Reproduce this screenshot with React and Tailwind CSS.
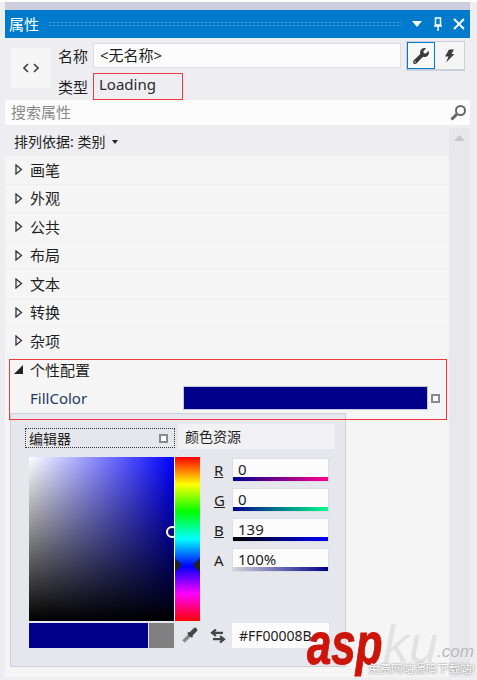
import React from 'react';
import { FaWrench } from 'react-icons/fa';

const font = { fontFamily: '"Noto Sans", "Noto Sans CJK SC", sans-serif' };

const categories = ['画笔', '外观', '公共', '布局', '文本', '转换', '杂项'];

const channels = [
  { label: 'R', value: '0', bar: 'bg-[linear-gradient(to_right,#00008b,#ff008b)]', underline: true },
  { label: 'G', value: '0', bar: 'bg-[linear-gradient(to_right,#00008b,#00ff8b)]', underline: true },
  { label: 'B', value: '139', bar: 'bg-[linear-gradient(to_right,#000000,#0000ff)]', underline: true },
  { label: 'A', value: '100%', bar: 'bg-[linear-gradient(to_right,#d4d4dc,#00008b)]', underline: false },
];

const Collapsed = () => (
  <svg width="8" height="11" viewBox="0 0 8 11" className="shrink-0">
    <path d="M1 1 L6.5 5.5 L1 10 Z" fill="none" stroke="#333" strokeWidth="1.3" />
  </svg>
);

const Expanded = () => (
  <svg width="9" height="9" viewBox="0 0 9 9" className="shrink-0">
    <path d="M9 0 V9 H0 Z" fill="#222" />
  </svg>
);

const TinySquare = () => (
  <div className="w-[9px] h-[9px] border-2 border-[#8a8a8a] bg-white" />
);

const Watermark = () => (
  <div className="absolute left-[306px] top-[618px] w-[171px] h-[62px] pointer-events-none italic" style={{ fontFamily: '"Liberation Sans", sans-serif' }}>
    <span className="absolute left-[1px] top-[6px] text-[60px] leading-[40px] font-bold text-[#cc1409] [-webkit-text-stroke:1px_#cc1409] origin-left scale-x-[0.73]">asp</span>
    <span className="absolute left-[77px] top-[8px] text-[52px] leading-[36px] text-[#e2e2e2]">ku</span>
    <span className="absolute left-[131px] top-[27px] text-[17px] leading-[14px] text-[#b9b9b9]">.com</span>
    <span className="absolute left-[62px] top-[45px] text-[11.5px] leading-[12px] not-italic text-white whitespace-nowrap [text-shadow:0_0_2px_#555]" style={font}>
      免费网站源码下载站!
    </span>
  </div>
);

export default function App() {
  return (
    <div className="relative w-[477px] h-[680px] overflow-hidden bg-[#eeeef2] text-[15px] text-[#1e1e1e]" style={font}>
      {/* top strip */}
      <div className="h-[2px] bg-white" />
      <div className="h-[8px] ml-[5px] w-[465px] bg-[#cccedb]" />

      {/* panel */}
      <div className="ml-[5px] w-[465px] h-[667px] flex flex-col">
        {/* title bar */}
        <div className="h-[28px] shrink-0 bg-[#007acc] flex items-center pl-[4px] pr-[5px] text-white">
          <span className="text-[15px] leading-none">属性</span>
          <div className="flex-1 h-[6px] mx-[9px] bg-[radial-gradient(#4aa3dd_1px,transparent_1px)] bg-[length:4px_3px]" />
          <svg width="10" height="6" viewBox="0 0 10 6" className="ml-[1px]">
            <path d="M0 0 H10 L5 6 Z" fill="#fff" />
          </svg>
          <svg width="10" height="14" viewBox="0 0 10 14" className="ml-[11px]">
            <path d="M2.5 1 H7.5 V8 H2.5 Z M1 9 H9 M5 9 V14" fill="none" stroke="#fff" strokeWidth="1.5" />
          </svg>
          <svg width="12" height="12" viewBox="0 0 12 12" className="ml-[10px]">
            <path d="M1 1 L11 11 M11 1 L1 11" stroke="#fff" strokeWidth="1.8" />
          </svg>
        </div>

        {/* name and type */}
        <div className="h-[62px] shrink-0 flex">
          <div className="w-[40px] h-[40px] mt-[10px] ml-[6px] bg-[#f5f5f5] flex items-center justify-center">
            <svg width="16" height="10" viewBox="0 0 16 10">
              <path d="M5 1 L1 5 L5 9 M11 1 L15 5 L11 9" fill="none" stroke="#444" strokeWidth="1.7" />
            </svg>
          </div>
          <div className="ml-[7px] w-[35px] flex flex-col">
            <div className="mt-[6px] h-[25px] leading-[25px]">名称</div>
            <div className="mt-[5px] h-[27px] leading-[27px]">类型</div>
          </div>
          <div className="w-[308px] flex flex-col">
            <div className="mt-[5px] h-[25px] border border-[#dcdce4] bg-[#fcfcfc] pl-[6px] leading-[22px]">&lt;无名称&gt;</div>
            <div className="mt-[5px] w-[90px] h-[27px] border border-[#f0393c] pl-[5px] leading-[21px] text-[#2a2a2a]">Loading</div>
          </div>
          <div className="ml-[5px] mt-[3px] w-[59px] h-[30px] border border-[#cccedb] border-b-2 flex">
            <div className="w-[28px] h-[27px] border border-[#007acc] bg-[#f7f7f7] flex items-center justify-center">
              <FaWrench size={16} color="#3c3c3c" />
            </div>
            <div className="flex-1 bg-[#f5f5f5] flex items-center justify-center">
              <svg width="11" height="14" viewBox="0 0 11 14">
                <path d="M5 0.5 H10 L7.5 5 H10.5 L2 13.5 L4.5 7.5 H1 Z" fill="#3c3c3c" />
              </svg>
            </div>
          </div>
        </div>

        {/* search */}
        <div className="h-[25px] shrink-0 bg-[#fcfcfc] flex items-center pl-[6px] pr-[3px] justify-between">
          <span className="text-[#8a8a8a]">搜索属性</span>
          <svg width="17" height="17" viewBox="0 0 17 17">
            <circle cx="10.5" cy="6.5" r="4.5" fill="none" stroke="#666" strokeWidth="2" />
            <path d="M7 10 L1.5 15.5" stroke="#666" strokeWidth="3" />
          </svg>
        </div>

        <div className="h-[3px] shrink-0" />

        {/* property grid */}
        <div className="flex-1 flex">
          <div className="w-[444px] shrink-0 bg-[#f5f5f5] flex flex-col">
            <div className="h-[28px] shrink-0 bg-[#eeeef2] flex items-center pl-[9px] pb-[1px]">
              <span className="text-[14px]">排列依据: 类别</span>
              <svg width="6" height="4" viewBox="0 0 6 4" className="ml-[7px]">
                <path d="M0 0 H6 L3 4 Z" fill="#222" />
              </svg>
            </div>
            {categories.map((name) => (
              <div key={name} className="h-[28.5px] shrink-0 border-b border-[#eeeef2] flex items-center pl-[10px] gap-[7px]">
                <Collapsed />
                <span>{name}</span>
              </div>
            ))}
            <div className="h-[28.5px] shrink-0 flex items-center pl-[9px] gap-[7px]">
              <Expanded />
              <span>个性配置</span>
            </div>
            <div className="h-[28px] shrink-0 flex items-center pl-[25px]">
              <span className="w-[153px] text-[#1f3a5f]">FillColor</span>
              <div className="w-[245px] h-[24px] border border-[#c5c8d8] bg-[#00008b]" />
              <div className="ml-[3px]">
                <TinySquare />
              </div>
            </div>
          </div>
          <div className="flex-1 bg-[#e8e8ec] flex justify-center pt-[7px]">
            <svg width="11" height="6" viewBox="0 0 11 6">
              <path d="M0 6 L5.5 0 L11 6 Z" fill="#c6c6ce" />
            </svg>
          </div>
        </div>
      </div>

      {/* colour editor popup */}
      <div className="absolute left-[10px] top-[413px] w-[336px] h-[254px] border border-[#cccedb] bg-[#e6e7ec] pl-[18px] flex flex-col">
        <div className="h-[43px] shrink-0 flex items-start">
          <div className="mt-[14px] -ml-[4px] w-[150px] h-[20px] border border-dotted border-[#333] flex items-center justify-between pl-[3px] pr-[6px]">
            <span className="text-[14px]">编辑器</span>
            <TinySquare />
          </div>
          <div className="mt-[10px] ml-[3px] w-[157px] h-[25px] bg-[#f2f2f4] pl-[7px] text-[14px] leading-[25px]">颜色资源</div>
        </div>
        <div className="flex">
          <div className="flex flex-col">
            <div className="flex">
              <div className="relative overflow-hidden w-[145px] h-[164px] bg-[linear-gradient(to_top,#000000,transparent),linear-gradient(to_right,#ffffff,#0000ff)]">
                <div className="absolute left-[137px] top-[69px] w-[12px] h-[12px] rounded-full border-2 border-white [box-shadow:inset_0_0_0_1px_#222]" />
              </div>
              <div className="relative w-[26px] h-[164px] border-l border-white bg-[linear-gradient(to_bottom,#ff0000,#ffff00,#00ff00,#00ffff,#0000ff,#ff00ff,#ff0000)]">
                <svg width="25" height="14" viewBox="0 0 25 14" className="absolute left-0 top-[101px]">
                  <path d="M0 0 L7 7 L0 14 Z M25 0 L18 7 L25 14 Z" fill="#222" />
                </svg>
              </div>
            </div>
            <div className="flex mt-[2px]">
              <div className="w-[119px] h-[25px] bg-[#00008b]" />
              <div className="ml-[1px] w-[25px] h-[25px] bg-[#808080]" />
              <div className="ml-[5px] w-[21px] h-[25px] flex items-center justify-center">
                <svg width="17" height="17" viewBox="0 0 17 17">
                  <path d="M2.5 14.5 L9 8" stroke="#8a8a8a" strokeWidth="3.6" />
                  <path d="M7 5.5 L11.5 10" stroke="#444" strokeWidth="2" />
                  <path d="M9.5 7.5 L14 3" stroke="#444" strokeWidth="4.5" strokeLinecap="round" />
                </svg>
              </div>
            </div>
          </div>
          <div className="ml-[14px] mt-[1px] w-[115px] flex flex-col gap-[6px]">
            {channels.map((c) => (
              <div key={c.label} className="flex items-center h-[24px]">
                <span className={`w-[18px] ${c.underline ? 'underline' : ''}`}>{c.label}</span>
                <div className="relative w-[97px] h-[24px] border border-[#dcdde6] bg-[#fcfcfc]">
                  <div className="pl-[5px] leading-[21px]">{c.value}</div>
                  <div className={`absolute left-0 right-0 bottom-0 h-[4px] ${c.bar}`} />
                </div>
              </div>
            ))}
            <div className="flex items-center h-[25px] mt-[45px]">
              <svg width="16" height="14" viewBox="0 0 16 14" className="ml-[-4px] mr-[6px] shrink-0">
                <path d="M6 0.5 L2 3.8 L6 7 M2 3.8 H13 M10 7 L14 10.2 L10 13.5 M14 10.2 H3" fill="none" stroke="#444" strokeWidth="2.2" />
              </svg>
              <div className="w-[97px] h-[25px] bg-[#fcfcfc] pl-[7px] leading-[25px] text-[14px] whitespace-nowrap overflow-hidden">#FF00008B</div>
            </div>
          </div>
        </div>
      </div>

      {/* red annotation */}
      <div className="absolute left-[9px] top-[359px] w-[438px] h-[61px] border border-[#f0393c] pointer-events-none" />

      <Watermark />
    </div>
  );
}
